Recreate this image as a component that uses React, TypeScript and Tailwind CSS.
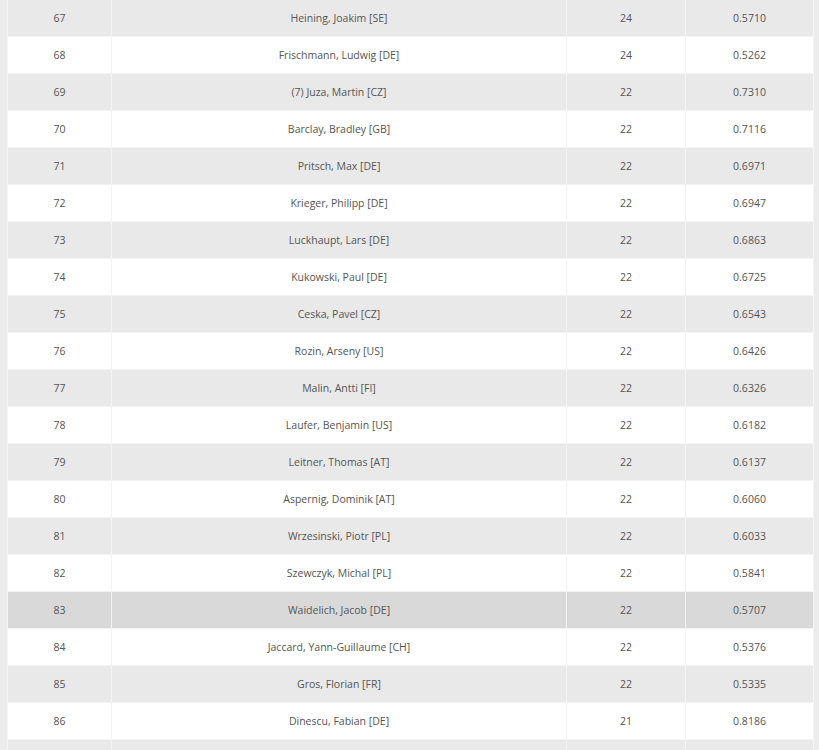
const rows: [number, string, string, string][] = [
  [67, 'Heining, Joakim [SE]', '24', '0.5710'],
  [68, 'Frischmann, Ludwig [DE]', '24', '0.5262'],
  [69, '(7) Juza, Martin [CZ]', '22', '0.7310'],
  [70, 'Barclay, Bradley [GB]', '22', '0.7116'],
  [71, 'Pritsch, Max [DE]', '22', '0.6971'],
  [72, 'Krieger, Philipp [DE]', '22', '0.6947'],
  [73, 'Luckhaupt, Lars [DE]', '22', '0.6863'],
  [74, 'Kukowski, Paul [DE]', '22', '0.6725'],
  [75, 'Ceska, Pavel [CZ]', '22', '0.6543'],
  [76, 'Rozin, Arseny [US]', '22', '0.6426'],
  [77, 'Malin, Antti [FI]', '22', '0.6326'],
  [78, 'Laufer, Benjamin [US]', '22', '0.6182'],
  [79, 'Leitner, Thomas [AT]', '22', '0.6137'],
  [80, 'Aspernig, Dominik [AT]', '22', '0.6060'],
  [81, 'Wrzesinski, Piotr [PL]', '22', '0.6033'],
  [82, 'Szewczyk, Michal [PL]', '22', '0.5841'],
  [83, 'Waidelich, Jacob [DE]', '22', '0.5707'],
  [84, 'Jaccard, Yann-Guillaume [CH]', '22', '0.5376'],
  [85, 'Gros, Florian [FR]', '22', '0.5335'],
  [86, 'Dinescu, Fabian [DE]', '21', '0.8186'],
]

const HIGHLIGHT = 83

export default function App() {
  return (
    <div className="h-[750px] w-[819px] overflow-hidden bg-[#ececec] pl-[7px] pr-[5px]">
      <table className="-mt-px w-full table-fixed border-collapse font-['Open_Sans',sans-serif] text-[10.5px] text-[#555]">
        <colgroup>
          <col className="w-[104px]" />
          <col className="w-[455px]" />
          <col className="w-[119px]" />
          <col />
        </colgroup>
        <tbody>
          {rows.map(([rank, name, games, score], i) => {
            const bg =
              rank === HIGHLIGHT ? 'bg-[#d9d9d9]' : i % 2 === 0 ? 'bg-[#e9e9e9]' : 'bg-white'
            return (
              <tr key={rank} className={`h-[37px] ${bg}`}>
                <td className="border border-[#f4f4f4] pt-px text-center">{rank}</td>
                <td className="border border-[#f4f4f4] pt-px text-center">{name}</td>
                <td className="border border-[#f4f4f4] pt-px text-center">{games}</td>
                <td className="border border-[#f4f4f4] pt-px text-center">{score}</td>
              </tr>
            )
          })}
          {/* next row, cut off by the bottom edge */}
          <tr className="h-[37px] bg-[#e9e9e9]">
            <td className="border border-[#f4f4f4]" />
            <td className="border border-[#f4f4f4]" />
            <td className="border border-[#f4f4f4]" />
            <td className="border border-[#f4f4f4]" />
          </tr>
        </tbody>
      </table>
    </div>
  )
}
